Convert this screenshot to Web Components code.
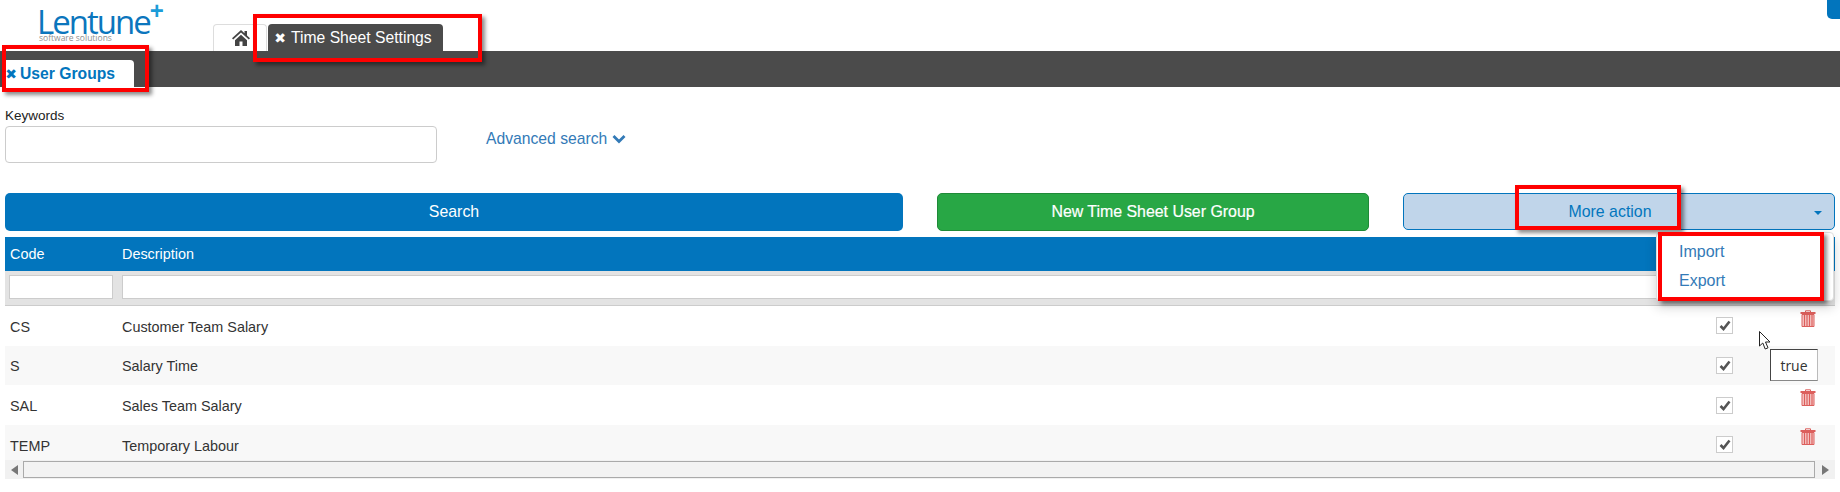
<!DOCTYPE html>
<html lang="en"><head><meta charset="utf-8"><title>Time Sheet Settings</title>
<style>
html,body{margin:0;padding:0;background:#fff}
body{width:1840px;height:492px;overflow:hidden;position:relative;font:14px "Liberation Sans",Arial,sans-serif;color:#333}
</style></head><body>
<app-shell></app-shell>
<script>
function def(name, html){
  customElements.define(name, class extends HTMLElement{
    connectedCallback(){
      if(this.shadowRoot) return;
      const r=this.attachShadow({mode:'open'});
      r.innerHTML=typeof html==='function'?html(this):html;
    }
  });
}
const xIcon=c=>`<span style="font:14px/1 'DejaVu Sans',sans-serif;color:${c};display:inline-block;width:14px;text-align:center;">✖</span>`;
const trash=`<svg width="16" height="17" viewBox="0 0 16 17" fill="none" stroke="#dc5f5c" stroke-width="1"><path d="M5.500 2.500V.8h5v1.700" /><path d="M.5 3h15" stroke-width="2"/><path d="M2 4.500h12v12H2z" fill="#f6c9c8"/><path d="M4.500 5v11M7 5v11M9.500 5v11M12 5v11" stroke-width="1.200"/></svg>`;

def('lentune-logo',`<style>
:host{display:flex;flex-direction:column;width:125px;color:#0b76bd;font-family:"Open Sans",sans-serif;line-height:1;margin-left:-2px}
.m{font-size:33px;font-weight:400;letter-spacing:-2px;height:30px;display:flex;align-items:flex-start;line-height:30px}
.p{font:700 24px/1 "Liberation Sans",sans-serif;color:#1c9cd8;margin:-8px 0 0 0;letter-spacing:0}
.s{font:8.500px/1 "Open Sans",sans-serif;color:#8f8f8f;margin:-3px 0 0 2px;letter-spacing:0}
</style><div class="m">Lentune<span class="p">+</span></div><div class="s">software solutions</div>`);

def('home-tab',`<style>
:host{display:flex;align-items:center;justify-content:center;box-sizing:border-box;width:54px;height:27px;background:#fff;border:1px solid #ddd;border-bottom:0;border-radius:4px 4px 0 0;padding-left:2px}
</style><svg width="18" height="16" viewBox="0 0 18 16"><path fill="#444" d="M9 0 0 8.200l1.200 1.300L9 2.500l7.800 7 1.200-1.300-3-2.700V1h-2.500v2.300zM3 10.200V16h4.500v-4.500h3V16H15v-5.800L9 4.800z"/></svg>`);

def('page-tab',`<style>
:host{display:flex;align-items:center;box-sizing:border-box;height:27px;width:175px;padding-left:5px;background:#4b4b4b;color:#fff;font-size:15.700px;border-radius:4px 4px 0 0}
span{margin-right:4px}
</style>${xIcon('#fff')}<slot></slot>`);

def('app-header',`<style>
:host{display:block;height:51px;position:relative}
.row{display:flex;align-items:flex-end;height:51px;padding-left:39px;box-sizing:border-box}
lentune-logo{align-self:flex-start;margin-top:7px}
.tabs{display:flex;gap:1px;margin-left:51px}
.corner{position:absolute;right:0;top:0;width:13px;height:19px;background:#0275bd;border-radius:0 0 0 5px}
</style><div class="row"><lentune-logo></lentune-logo><div class="tabs"><home-tab></home-tab><page-tab>Time Sheet Settings</page-tab></div></div><div class="corner"></div>`);

def('sub-bar',`<style>
:host{display:flex;align-items:flex-end;height:36px;background:#4b4b4b;padding-left:5px}
.t{display:flex;align-items:center;height:27px;width:129px;box-sizing:border-box;background:#fff;color:#0275bd;font-weight:700;font-size:15.700px;border-radius:0 4px 0 0}
.t span{margin-right:2px;margin-left:-1px}
</style><div class="t">${xIcon('#0275bd')}User Groups</div>`);

def('search-form',`<style>
:host{display:flex;padding:21px 0 0 5px;height:76px;box-sizing:border-box}
.f{display:flex;flex-direction:column;width:432px}
label{font-size:13.500px;line-height:15px;color:#222;margin-bottom:3px}
.i{height:37px;border:1px solid #ccc;border-radius:4px;box-sizing:border-box;background:#fff}
a{margin:21px 0 0 49px;height:20px;color:#337ab7;font-size:15.700px;line-height:20px;display:flex;align-items:center;gap:5px}
</style><div class="f"><label>Keywords</label><div class="i"></div></div>
<a>Advanced search <svg width="14" height="10" viewBox="0 0 14 10"><path d="M1.500 2 7 7.500 12.500 2" fill="none" stroke="#337ab7" stroke-width="2.800"/></svg></a>`);

def('action-bar',`<style>
:host{display:grid;grid-template-columns:898px 34px 432px 34px 432px;padding:30px 0 0 5px;box-sizing:border-box;height:74px;align-items:start}
.b{box-sizing:border-box;display:flex;align-items:center;justify-content:center;border-radius:5px;font-size:15.900px}
.s{height:38px;background:#0275bd;color:#fff;grid-column:1}
.n{height:38px;background:#28a745;color:#fff;grid-column:3;border:1px solid #1f8a38;-webkit-text-stroke:.2px #fff}
.m{height:37px;background:#c0d5ea;color:#0275bd;grid-column:5;border:1px solid #0275bd;position:relative;padding-right:18px}
.c{position:absolute;right:12px;top:17px;border:4px solid transparent;border-top-color:#0275bd;border-bottom:0}
</style><div class="b s">Search</div><div class="b n">New Time Sheet User Group</div><div class="b m">More action<i class="c"></i></div>`);

def('grid-row',t=>{
  const alt=t.hasAttribute('alt');
  return `<style>
:host{display:grid;grid-template-columns:117px 1fr 17px 67px 16px 19px;align-items:center;height:39.670px;background:${alt?'#f8f8f8':'#fff'};font-size:14.400px;color:#333}
.c{padding-left:5px}
.x{padding-top:2px}
.k{width:17px;height:17px;box-sizing:border-box;border:1px solid #ccc;background:#fff;display:flex;align-items:center;justify-content:center;grid-column:3}
.t{grid-column:5;align-self:start;margin-top:3.500px;height:17px}
svg{display:block}
</style><div class="c x">${t.getAttribute('code')}</div><div class="x">${t.getAttribute('desc')}</div>
<div class="k"><svg width="12" height="11" viewBox="0 0 12 11"><path d="M1.500 6 4.500 9 10.500 1.500" fill="none" stroke="#555" stroke-width="2.600"/></svg></div>
<div class="t">${t.hasAttribute('notrash')?'':trash}</div>`;
});

def('data-grid',`<style>
:host{display:block;margin:0 5px}
.h{display:grid;grid-template-columns:117px 1fr;align-items:center;height:34px;background:#0275bd;color:#fff;font-size:14.400px}
.h div:first-child{padding-left:5px}
.f{display:grid;grid-template-columns:104px 1578px;column-gap:9px;padding:4px 0 6px 4px;height:35px;box-sizing:border-box;background:#e3e3e3;border-bottom:1px solid #ccc}
.f i{display:block;height:24px;box-sizing:border-box;background:#fff;border:1px solid #ccc}
.r{height:154px;overflow:hidden}
.sb{height:19px;background:#f1f1f1;display:grid;grid-template-columns:18px 1fr 20px;align-items:center;box-sizing:border-box}
.th{height:17px;box-sizing:border-box;background:#f3f3f3;border:1px solid #aaa}
.a{width:0;height:0;border:5.500px solid transparent;justify-self:center}
.l{border-right:7px solid #777;border-left:0}
.rt{border-left:7px solid #777;border-right:0}
</style><div class="h"><div>Code</div><div>Description</div></div>
<div class="f"><i></i><i></i></div>
<div class="r"><slot></slot></div>
<div class="sb"><div class="a l"></div><div class="th"></div><div class="a rt"></div></div>`);

def('action-menu',`<style>
:host{position:absolute;left:1656px;top:232px;width:178px;height:69px;box-sizing:border-box;background:#fff;border:1px solid #ddd;border-radius:4px;box-shadow:0 6px 12px rgba(0,0,0,.18);padding-top:5px;font-size:16px;color:#337ab7}
div{padding-left:22px;height:29px;line-height:28px}
</style><div>Import</div><div>Export</div>`);

def('cell-tip',`<style>
:host{position:absolute;left:1770px;top:349px;width:48px;height:32px;box-sizing:border-box;background:#fff;border:1px solid #444;border-right-color:#bbb;border-bottom-color:#888;font:14px "Open Sans",sans-serif;color:#333;display:flex;align-items:center;justify-content:center}
</style><slot></slot>`);

def('note-box',`<style>
:host{position:absolute;box-sizing:border-box;border:4px solid #f00;box-shadow:3px 3px 4px rgba(0,0,0,.45);pointer-events:none}
</style>`);

def('mouse-cursor',`<style>
:host{position:absolute;left:1759px;top:331px;width:13px;height:20px}
svg{display:block}
</style><svg width="13" height="20" viewBox="0 0 13 20"><path d="M.5.500V15l3.300-3 2.400 6 2.800-1.200-2.500-5.800H11z" fill="#fff" stroke="#222" stroke-width="1"/></svg>`);

def('app-shell',`<style>
:host{display:block;width:1840px;height:492px;position:relative}
note-box.a{left:2px;top:45px;width:147px;height:47px}
note-box.b{left:253px;top:14px;width:229px;height:48px}
note-box.c{left:1515px;top:185px;width:166px;height:45px}
note-box.d{left:1658px;top:232px;width:166px;height:69px}
</style>
<app-header></app-header><sub-bar></sub-bar><search-form></search-form><action-bar></action-bar>
<data-grid>
<grid-row code="CS" desc="Customer Team Salary"></grid-row>
<grid-row alt notrash code="S" desc="Salary Time"></grid-row>
<grid-row code="SAL" desc="Sales Team Salary"></grid-row>
<grid-row alt code="TEMP" desc="Temporary Labour"></grid-row>
</data-grid>
<action-menu></action-menu><cell-tip>true</cell-tip><mouse-cursor></mouse-cursor>
<note-box class="a"></note-box><note-box class="b"></note-box><note-box class="c"></note-box><note-box class="d"></note-box>`);
</script>
</body></html>
